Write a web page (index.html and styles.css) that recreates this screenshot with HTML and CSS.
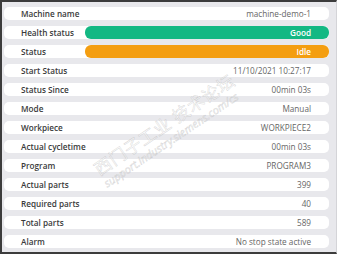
FILE: index.html
```html
<!DOCTYPE html>
<html lang="en">

<head>
    <meta charset="UTF-8">
    <meta name="viewport" content="width=device-width, initial-scale=1.0">
    <title>Machine Status</title>
    <link rel="stylesheet" href="styles.css">
</head>

<body>
    <div class="frame">
        <div class="list">
            <div class="row"><span class="label">Machine name</span><span class="value">machine-demo-1</span></div>
            <div class="row"><span class="label">Health status</span><span class="value pill good">Good</span></div>
            <div class="row"><span class="label">Status</span><span class="value pill idle">Idle</span></div>
            <div class="row"><span class="label">Start Status</span><span class="value">11/10/2021 10:27:17</span></div>
            <div class="row"><span class="label">Status Since</span><span class="value">00min 03s</span></div>
            <div class="row"><span class="label">Mode</span><span class="value">Manual</span></div>
            <div class="row"><span class="label">Workpiece</span><span class="value">WORKPIECE2</span></div>
            <div class="row"><span class="label">Actual cycletime</span><span class="value">00min 03s</span></div>
            <div class="row"><span class="label">Program</span><span class="value">PROGRAM3</span></div>
            <div class="row"><span class="label">Actual parts</span><span class="value">399</span></div>
            <div class="row"><span class="label">Required parts</span><span class="value">40</span></div>
            <div class="row"><span class="label">Total parts</span><span class="value">589</span></div>
            <div class="row"><span class="label">Alarm</span><span class="value">No stop state active</span></div>
        </div>

        <div class="watermark">
            <div class="wm-big">西门子工业 技术论坛</div>
            <div class="wm-small">support.industry.siemens.com/cs</div>
        </div>
    </div>
</body>

</html>
```

FILE: styles.css
```css
html, body {
    margin: 0;
    padding: 0;
}

body {
    font-family: "Open Sans", "Noto Sans CJK SC", sans-serif;
    font-size: 8.2px;
    background-color: #e8e8ec;
}

.frame {
    position: relative;
    width: 337px;
    height: 254px;
    box-sizing: border-box;
    border-left: 2px solid #3c3c3c;
    border-top: 2px solid #3c3c3c;
    border-bottom: 2px solid #3c3c3c;
    border-right: 1px solid #d4d4d8;
    background-color: #e8e8ec;
    padding: 5px 7px 0 2px;
    overflow: hidden;
}

.list {
    display: flex;
    flex-direction: column;
    gap: 6px;
}

.row {
    display: flex;
    align-items: center;
    height: 13px;
    background-color: #fff;
    border-radius: 5px;
}

.label {
    width: 64px;
    flex: none;
    padding-left: 17px;
    font-weight: 600;
    color: #3a3a3a;
    white-space: nowrap;
}

.value {
    flex: 1;
    text-align: right;
    padding-right: 18px;
    color: #666;
    white-space: nowrap;
}

.pill {
    align-self: stretch;
    display: flex;
    align-items: center;
    justify-content: flex-end;
    border-radius: 6px;
    color: #fff;
    font-weight: 600;
}

.good {
    background-color: #13b883;
}

.idle {
    background-color: #f49e11;
}

.watermark {
    position: absolute;
    left: 166px;
    top: 128px;
    transform: translate(-50%, -50%) rotate(-34deg);
    text-align: left;
    color: rgba(255, 255, 255, 0.55);
    -webkit-text-stroke: 0.5px rgba(140, 140, 140, 0.35);
    pointer-events: none;
    white-space: nowrap;
    line-height: 1;
}

.wm-big {
    font-size: 17px;
    letter-spacing: 0.8px;
}

.wm-small {
    font-size: 11px;
    font-style: italic;
    margin-top: 2px;
}
```
